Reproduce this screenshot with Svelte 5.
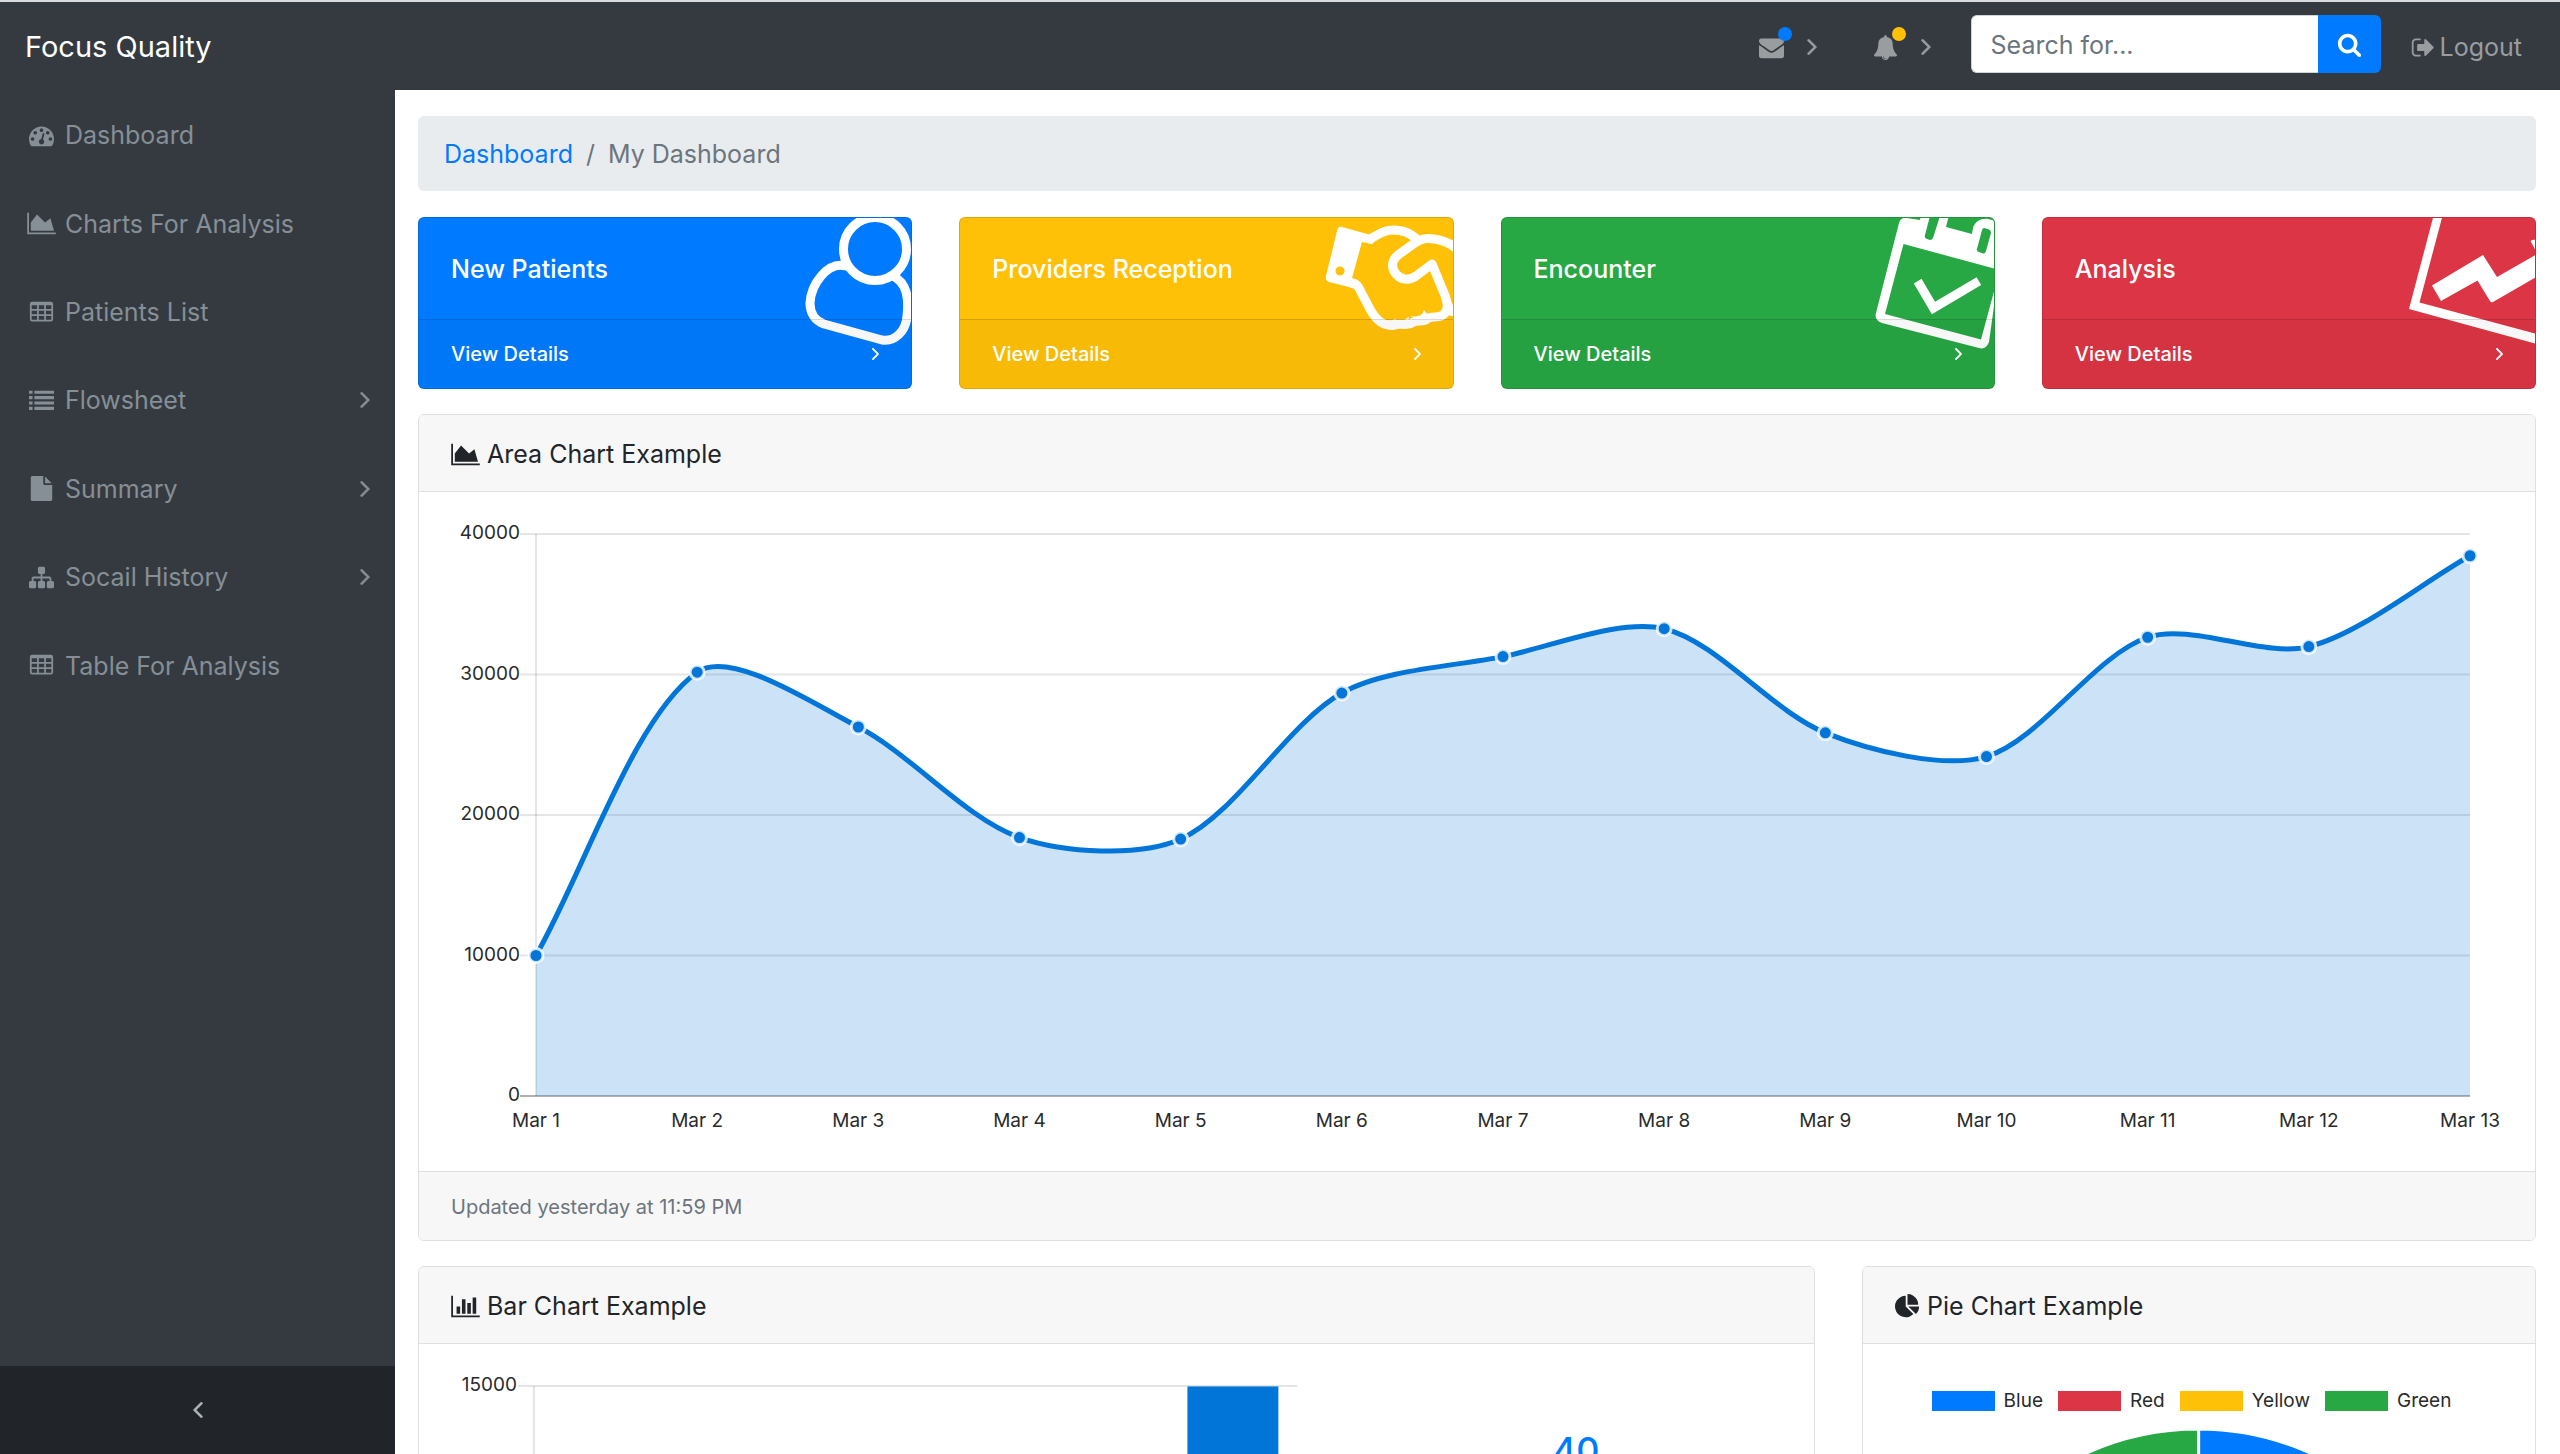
<script>
  const icons = {
    tachometer: { w: 1792, d: 'M384 1152q0-53-37.5-90.5t-90.5-37.5-90.5 37.5-37.5 90.5 37.5 90.5 90.5 37.5 90.5-37.5 37.5-90.5zm192-448q0-53-37.5-90.5t-90.5-37.5-90.5 37.5-37.5 90.5 37.5 90.5 90.5 37.5 90.5-37.5 37.5-90.5zm428 481l101-382q6-26-7.5-48.5t-38.5-29.5-48 6.5-30 39.5l-101 382q-60 5-107 43.5t-63 98.5q-20 77 20 146t117 89 146-20 89-117q16-60-6-117t-72-91zm660-33q0-53-37.5-90.5t-90.5-37.5-90.5 37.5-37.5 90.5 37.5 90.5 90.5 37.5 90.5-37.5 37.5-90.5zm-640-640q0-53-37.5-90.5t-90.5-37.5-90.5 37.5-37.5 90.5 37.5 90.5 90.5 37.5 90.5-37.5 37.5-90.5zm448 192q0-53-37.5-90.5t-90.5-37.5-90.5 37.5-37.5 90.5 37.5 90.5 90.5 37.5 90.5-37.5 37.5-90.5zm320 448q0 261-141 483-19 29-54 29h-1402q-35 0-54-29-141-221-141-483 0-182 71-348t191-286 286-191 348-71 348 71 286 191 191 286 71 348z' },
    area: { w: 2048, d: 'M2048 1536v128h-2048v-1536h128v1408h1920zm-384-1024l256 896h-1664v-576l448-576 576 576z' },
    bar: { w: 2048, d: 'M640 896v512h-256v-512h256zm384-512v1024h-256v-1024h256zm1024 1152v128h-2048v-1536h128v1408h1920zm-640-896v768h-256v-768h256zm384-384v1152h-256v-1152h256z' },
    pie: { w: 1792, d: 'M768 890l546 546q-106 108-247.5 168t-298.5 60q-209 0-385.5-103t-279.5-279.5-103-385.5 103-385.5 279.5-279.5 385.5-103v762zm187 6h773q0 157-60 298.5t-168 247.5zm709-128h-768v-768q209 0 385.5 103t279.5 279.5 103 385.5z' },
    table: { w: 1792, d: 'M224 128h1344q160 0 160 160v1088q0 160-160 160h-1344q-160 0-160-160v-1088q0-160 160-160zM192 384v256h384v-256zM704 384v256h384v-256zM1216 384v256h384v-256zM192 768v256h384v-256zM704 768v256h384v-256zM1216 768v256h384v-256zM192 1152v256h384v-256zM704 1152v256h384v-256zM1216 1152v256h384v-256z' },
    list: { w: 1792, d: 'M0 192h256v224h-256zM384 192h1408v224h-1408zM0 576h256v224h-256zM384 576h1408v224h-1408zM0 960h256v224h-256zM384 960h1408v224h-1408zM0 1344h256v224h-256zM384 1344h1408v224h-1408z' },
    file: { w: 1792, d: 'M1152 512v-472q22 14 36 28l408 408q14 14 28 36h-472zm-128 32q0 40 28 68t68 28h544v1056q0 40-28 68t-68 28h-1344q-40 0-68-28t-28-68v-1600q0-40 28-68t68-28h800v544z' },
    sitemap: { w: 1792, d: 'M1792 1248v320q0 40-28 68t-68 28h-320q-40 0-68-28t-28-68v-320q0-40 28-68t68-28h96v-192h-512v192h96q40 0 68 28t28 68v320q0 40-28 68t-68 28h-320q-40 0-68-28t-28-68v-320q0-40 28-68t68-28h96v-192h-512v192h96q40 0 68 28t28 68v320q0 40-28 68t-68 28h-320q-40 0-68-28t-28-68v-320q0-40 28-68t68-28h96v-192q0-52 38-90t90-38h512v-192h-96q-40 0-68-28t-28-68v-320q0-40 28-68t68-28h320q40 0 68 28t28 68v320q0 40-28 68t-68 28h-96v192h512q52 0 90 38t38 90v192h96q40 0 68 28t28 68z' },
    envelope: { w: 1792, d: 'M1792 710v794q0 66-47 113t-113 47h-1472q-66 0-113-47t-47-113v-794q44 49 101 87 362 246 497 345 57 42 92.5 65.5t94.5 48 110 24.5h2q51 0 110-24.5t94.5-48 92.5-65.5q170-123 498-345 57-39 100-87zm0-294q0 79-49 151t-122 123q-376 261-468 325-10 7-42.5 31t-54 38.5-52 32.5-57.5 27-50 9h-2q-23 0-50-9t-57.5-27-52-32.5-54-38.5-42.5-31q-91-64-262-182.5t-205-142.5q-62-42-117-115.5t-55-136.5q0-78 41.5-130t118.5-52h1472q65 0 112.5 47t47.5 113z' },
    bell: { w: 1792, d: 'M912 1696q0-16-16-16-59 0-101.5-42.5t-42.5-101.5q0-16-16-16t-16 16q0 73 51.5 124.5t124.5 51.5q16 0 16-16zm816-288q0 52-38 90t-90 38h-448q0 106-75 181t-181 75-181-75-75-181h-448q-52 0-90-38t-38-90q50-42 91-88t85-119.5 74.5-158.5 50-206 19.5-260q0-152 117-282.5t307-158.5q-8-19-8-39 0-40 28-68t68-28 68 28 28 68q0 20-8 39 190 28 307 158.5t117 282.5q0 139 19.5 260t50 206 74.5 158.5 85 119.5 91 88z' },
    search: { w: 1792, d: 'M1216 832q0-185-131.5-316.5t-316.5-131.5-316.5 131.5-131.5 316.5 131.5 316.5 316.5 131.5 316.5-131.5 131.5-316.5zm512 832q0 52-38 90t-90 38q-54 0-90-38l-343-342q-179 124-399 124-143 0-273.5-55.5t-225-150-150-225-55.5-273.5 55.5-273.5 150-225 225-150 273.5-55.5 273.5 55.5 225 150 150 225 55.5 273.5q0 220-124 399l343 343q37 37 37 90z' },
    signout: { w: 1664, d: 'M704 1440q0 4 1 20t.5 26.5-3 23.5-10 19.5-20.5 6.5h-320q-119 0-203.5-84.5t-84.5-203.5v-704q0-119 84.5-203.5t203.5-84.5h320q13 0 22.5 9.5t9.5 22.5q0 4 1 20t.5 26.5-3 23.5-10 19.5-20.5 6.5h-320q-66 0-113 47t-47 113v704q0 66 47 113t113 47h312l11.5 1 11.5 3 8 5.5 7 9 2 13.5zm928-544q0 26-19 45l-544 544q-19 19-45 19t-45-19-19-45v-288h-448q-26 0-45-19t-19-45v-384q0-26 19-45t45-19h448v-288q0-26 19-45t45-19 45 19l544 544q19 19 19 45z' }
  };

  const navItems = [
    { label: 'Dashboard', icon: 'tachometer' },
    { label: 'Charts For Analysis', icon: 'area' },
    { label: 'Patients List', icon: 'table' },
    { label: 'Flowsheet', icon: 'list', children: true },
    { label: 'Summary', icon: 'file', children: true },
    { label: 'Socail History', icon: 'sitemap', children: true },
    { label: 'Table For Analysis', icon: 'table' }
  ];

  const cards = [
    { title: 'New Patients', color: 'primary', art: 'user' },
    { title: 'Providers Reception', color: 'warning', art: 'handshake' },
    { title: 'Encounter', color: 'success', art: 'calendar' },
    { title: 'Analysis', color: 'danger', art: 'line' }
  ];

  // Area chart
  const visits = [10000, 30162, 26263, 18394, 18287, 28682, 31274, 33259, 25849, 24159, 32651, 31984, 38451];
  const area = { left: 85, right: 2019, top: 10, bottom: 572, max: 40000 };
  const areaTicks = [0, 10000, 20000, 30000, 40000];
  const areaY = (v) => area.bottom - (v / area.max) * (area.bottom - area.top);
  const points = visits.map((v, i) => ({
    x: area.left + (i * (area.right - area.left)) / (visits.length - 1),
    y: areaY(v),
    label: `Mar ${i + 1}`
  }));

  // Control points on either side of a point, weighted by segment length
  function controls(i, tension = 0.3) {
    const cur = points[i];
    const prev = points[i - 1] || cur;
    const next = points[i + 1] || cur;
    const d01 = Math.hypot(cur.x - prev.x, cur.y - prev.y);
    const d12 = Math.hypot(next.x - cur.x, next.y - cur.y);
    const fa = (tension * d01) / (d01 + d12);
    const fb = (tension * d12) / (d01 + d12);
    const dx = next.x - prev.x;
    const dy = next.y - prev.y;
    return {
      before: `${cur.x - fa * dx} ${cur.y - fa * dy}`,
      after: `${cur.x + fb * dx} ${cur.y + fb * dy}`
    };
  }

  const linePath = points
    .map((p, i) => (i === 0 ? `M${p.x} ${p.y}` : `C${controls(i - 1).after} ${controls(i).before} ${p.x} ${p.y}`))
    .join(' ');
  const fillPath = `${linePath} L${area.right} ${area.bottom} L${area.left} ${area.bottom} Z`;

  // Bar chart
  const revenue = [4215, 5312, 6251, 7841, 9821, 14984];
  const barTicks = [0, 5000, 10000, 15000];
  const barY = (v) => 410 - (v / 15000) * 400;

  // Pie chart
  const slices = [
    { label: 'Blue', value: 12.21, color: '#007bff' },
    { label: 'Red', value: 15.58, color: '#dc3545' },
    { label: 'Yellow', value: 11.25, color: '#ffc107' },
    { label: 'Green', value: 8.32, color: '#28a745' }
  ];
  const total = slices.reduce((sum, s) => sum + s.value, 0);
  let angle = 0;
  const wedges = slices.map((s) => {
    const start = angle;
    angle += (s.value / total) * Math.PI * 2;
    const large = angle - start > Math.PI ? 1 : 0;
    const at = (a) => `${274 + 272 * Math.sin(a)} ${274 - 272 * Math.cos(a)}`;
    return { color: s.color, d: `M274 274 L${at(start)} A272 272 0 ${large} 1 ${at(angle)} Z` };
  });

  let search = $state('');
  let collapsed = $state(false);
</script>

{#snippet icon(name)}
  <svg class="icon" class:wide={icons[name].w > 1792} viewBox="0 0 {icons[name].w} 1792" aria-hidden="true">
    <path fill-rule="evenodd" d={icons[name].d} />
  </svg>
{/snippet}

{#snippet chevron()}
  <svg class="chevron" viewBox="589 461 582 998" aria-hidden="true">
    <path d="M1171 960q0 13-10 23l-466 466q-10 10-23 10t-23-10l-50-50q-10-10-10-23t10-23l393-393-393-393q-10-10-10-23t10-23l50-50q10-10 23-10t23 10l466 466q10 10 10 23z" />
  </svg>
{/snippet}

<div class="app" class:collapsed>
  <header class="topbar">
    <a class="brand" href="#home">Focus Quality</a>
    <div class="tools">
      <button type="button" class="tool" aria-label="Messages">
        <span class="tool-icon">{@render icon('envelope')}<span class="dot blue"></span></span>
        {@render chevron()}
      </button>
      <button type="button" class="tool" aria-label="Alerts">
        <span class="tool-icon">{@render icon('bell')}<span class="dot yellow"></span></span>
        {@render chevron()}
      </button>
      <form class="search" onsubmit={(e) => e.preventDefault()}>
        <input type="text" placeholder="Search for..." aria-label="Search for" bind:value={search} />
        <button type="submit" aria-label="Search">{@render icon('search')}</button>
      </form>
      <a class="logout" href="#logout">{@render icon('signout')}Logout</a>
    </div>
  </header>

  <div class="shell">
    <aside class="sidebar">
      <nav>
        {#each navItems as item}
          <a href="#nav">
            <span class="fw">{@render icon(item.icon)}</span>
            <span class="label">{item.label}</span>
            {#if item.children}{@render chevron()}{/if}
          </a>
        {/each}
      </nav>
      <button type="button" class="toggle" aria-label="Toggle sidebar" onclick={() => (collapsed = !collapsed)}>
        {@render chevron()}
      </button>
    </aside>

    <main>
      <ol class="breadcrumb">
        <li><a href="#dashboard">Dashboard</a></li>
        <li>My Dashboard</li>
      </ol>

      <div class="cards">
        {#each cards as card}
          <section class="stat {card.color}">
            <svg class="art" viewBox="0 0 140 140" aria-hidden="true">
              {#if card.art === 'user'}
                <g class="outline">
                  <circle cx="104" cy="31" r="31.5" />
                  <path d="M75 48C56 43 40 67 39 85C39 95 44 103 53 106L111 122C124 124 135 113 136 98C138 80 136 65 122 58" />
                </g>
              {:else if card.art === 'handshake'}
                <path fill-rule="evenodd" d="M29 9L58 17L60 26L49 24L39 60L45 62L40 70L16 64Q12 63 13 58L24 13Q25 8 29 9ZM31.500 53A4.500 4.500 0 1 0 22.500 53A4.500 4.500 0 1 0 31.500 53Z" />
                <g class="outline">
                  <path d="M57 21C64 18 69 12 80 12C91 12 96 15 104 21" />
                  <path d="M144 31C136 24 125 21 116 20.500C108 20 103 24 99 27L85 37C78 43 78 50 83 56C88 62 96 63 103 58L119 46L131 75C135 85 136 92 130 97C124 101 119 97 114 101C110 105 103 101 99 105C94 108 86 105 82 107C72 109 64 103 58 93L48 74C46 69 43 65 40 66" />
                  <path d="M135 87L137 93L144 94" />
                </g>
                <path d="M111 92Q115 98 120 98L109 103L97 98Q101 99 105 98Q110 97 111 92ZM82 101Q88 105 96 99L95 107L76 107L74 102Q78 103 82 101Z" />
              {:else if card.art === 'calendar'}
                <path fill-rule="evenodd" d="M45 5Q47-1 53 0L66 2L67-3H95L92 9L118 16L119 10C121 3 128 0 134 1L142 3V74L135 124Q132 132 125 130L28 105Q20 102 22 95ZM49.500 26L31 96L127 121.500L142 66V51ZM76-2L71 17Q70 20 73 21L76 22Q78 22 79 20L86-2ZM132 10.500Q129 9 128 12L123 31Q122 33 125 34L129 35.500Q131 36 132 33L137 15Q137 12 135 11.500Z" />
                <path class="check" d="M66 67L79.500 90L121 65.500" />
              {:else}
                <path d="M39-4H48L24.500 84.500L142 116V126L14 91ZM37 67.500L88 37L102 59L142 36V58.500L98 84Q96 85 95 83L82.500 62.500L46 83ZM136 24Q135 22 138 22L142 21V35Z" />
              {/if}
            </svg>
            <div class="stat-body">{card.title}</div>
            <a class="stat-footer" href="#details">
              <span>View Details</span>
              {@render chevron()}
            </a>
          </section>
        {/each}
      </div>

      <section class="panel">
        <h2>{@render icon('area')}Area Chart Example</h2>
        <div class="panel-body">
          <svg class="chart" viewBox="0 0 2052 615" role="img" aria-label="Area chart">
            {#each areaTicks as tick}
              <line class="grid" class:zero={tick === 0} x1={area.left - 16} x2={area.right} y1={areaY(tick)} y2={areaY(tick)} />
              <text x={area.left - 16} y={areaY(tick) + 5} text-anchor="end">{tick}</text>
            {/each}
            <line class="grid" x1={area.left} x2={area.left} y1={area.top} y2={area.bottom} />
            <path class="area-fill" d={fillPath} />
            <path class="area-line" d={linePath} />
            {#each points as p}
              <circle class="point" cx={p.x} cy={p.y} r="7" />
              <text x={p.x} y="603" text-anchor="middle">{p.label}</text>
            {/each}
          </svg>
        </div>
        <div class="panel-footer">Updated yesterday at 11:59 PM</div>
      </section>

      <div class="row">
        <section class="panel">
          <h2>{@render icon('bar')}Bar Chart Example</h2>
          <div class="panel-body bar-body">
            <svg class="chart" viewBox="0 0 872 436" role="img" aria-label="Bar chart">
              {#each barTicks as tick}
                <line class="grid" x1="67" x2="847" y1={barY(tick)} y2={barY(tick)} />
                <text x="66" y={barY(tick) + 5} text-anchor="end">{tick}</text>
              {/each}
              <line class="grid" x1="83" x2="83" y1="10" y2="410" />
              {#each revenue as value, i}
                <rect class="bar" x={102 + i * 127} y={barY(value)} width="91" height={410 - barY(value)} />
              {/each}
            </svg>
            <div class="figure">40</div>
          </div>
        </section>

        <section class="panel">
          <h2>{@render icon('pie')}Pie Chart Example</h2>
          <div class="panel-body">
            <ul class="legend">
              {#each slices as s}
                <li><span class="swatch" style="background: {s.color}"></span>{s.label}</li>
              {/each}
            </ul>
            <svg class="pie" viewBox="0 0 548 548" role="img" aria-label="Pie chart">
              {#each wedges as w}
                <path d={w.d} fill={w.color} />
              {/each}
            </svg>
          </div>
        </section>
      </div>
    </main>
  </div>
</div>

<style>
  :global(body) {
    margin: 0;
  }

  .app {
    height: 100vh;
    display: flex;
    flex-direction: column;
    overflow: hidden;
    box-sizing: border-box;
    border-top: 2px solid #dadce0;
    background: #fff;
    color: #212529;
    font-family: Inter, "Liberation Sans", sans-serif;
    font-size: 25px;
    line-height: 38px;
  }

  a {
    color: inherit;
    text-decoration: none;
  }

  button {
    padding: 0;
    border: 0;
    background: none;
    color: inherit;
    font: inherit;
    cursor: pointer;
  }

  .icon {
    width: 25px;
    height: 25px;
    fill: currentColor;
    flex: none;
  }

  .icon.wide {
    width: 29px;
  }

  .chevron {
    width: 10px;
    height: 16px;
    fill: currentColor;
    stroke: currentColor;
    stroke-width: 30px;
    flex: none;
  }

  /* Top bar */
  .topbar {
    flex: none;
    height: 88px;
    box-sizing: border-box;
    display: flex;
    align-items: center;
    justify-content: space-between;
    padding: 2px 38px 0 25px;
    background: #343a40;
    color: #9a9da0;
  }

  .brand {
    color: #fff;
    font-size: 29px;
  }

  .tools {
    display: flex;
    align-items: center;
  }

  .tool {
    display: flex;
    align-items: center;
    gap: 23px;
    margin-right: 56px;
  }

  .tool + .tool {
    margin-right: 40px;
  }

  .tool-icon {
    position: relative;
    display: flex;
  }

  .dot {
    position: absolute;
    top: -8px;
    right: -8px;
    width: 14px;
    height: 14px;
    border-radius: 50%;
  }

  .dot.blue {
    background: #007bff;
  }

  .dot.yellow {
    background: #ffc107;
  }

  .search {
    display: flex;
    height: 58px;
    margin: 0 29px 6px 0;
  }

  .search input {
    width: 347px;
    box-sizing: border-box;
    padding: 2px 19px 0;
    border: 1px solid #ced4da;
    border-right: 0;
    border-radius: 6px 0 0 6px;
    background: #fff;
    color: #495057;
    font: inherit;
  }

  .search input::placeholder {
    color: #6c757d;
    opacity: 1;
  }

  .search button {
    width: 63px;
    display: flex;
    align-items: center;
    justify-content: center;
    border-radius: 0 6px 6px 0;
    background: #007bff;
    color: #fff;
  }

  .logout {
    display: flex;
    align-items: center;
    gap: 5px;
  }

  /* Sidebar */
  .shell {
    flex: 1;
    min-height: 0;
    display: flex;
  }

  .sidebar {
    flex: none;
    width: 395px;
    display: flex;
    flex-direction: column;
    justify-content: space-between;
    background: #343a40;
    color: #868e96;
  }

  .collapsed .sidebar {
    width: 88px;
  }

  nav {
    display: grid;
    grid-auto-rows: 1fr;
    min-height: 619px;
    padding-top: 1px;
  }

  nav a {
    display: flex;
    align-items: center;
    padding: 0 25px;
    overflow: hidden;
  }

  .fw {
    width: 32px;
    display: flex;
    justify-content: center;
    margin-right: 8px;
  }

  .label {
    flex: 1;
    white-space: nowrap;
  }

  .toggle {
    height: 88px;
    display: flex;
    align-items: center;
    justify-content: center;
    background: #212529;
    color: #adb5bd;
  }

  .toggle .chevron {
    transform: rotate(180deg);
  }

  .collapsed .toggle .chevron {
    transform: none;
  }

  /* Content */
  main {
    flex: 1;
    min-width: 0;
    overflow: hidden;
    padding: 26px 24px 0 23px;
  }

  .breadcrumb {
    display: flex;
    margin: 0 0 26px;
    padding: 19px 26px 18px;
    border-radius: 6px;
    background: #e9ecef;
    color: #6c757d;
    list-style: none;
  }

  .breadcrumb li + li::before {
    content: '/';
    padding: 0 13px;
  }

  .breadcrumb a {
    color: #007bff;
  }

  .cards {
    display: grid;
    grid-template-columns: repeat(4, 1fr);
    gap: 47px;
    margin-bottom: 25px;
  }

  .stat {
    position: relative;
    overflow: hidden;
    border: 1px solid rgba(0, 0, 0, 0.125);
    border-radius: 6px;
    color: #fff;
    font-weight: 500;
  }

  .primary {
    background: #007bff;
  }

  .warning {
    background: #ffc107;
  }

  .success {
    background: #28a745;
  }

  .danger {
    background: #dc3545;
  }

  .art {
    position: absolute;
    top: 0;
    right: 0;
    width: 140px;
    height: 140px;
    fill: #fff;
  }

  .outline,
  .check {
    fill: none;
    stroke: #fff;
    stroke-width: 9px;
    stroke-linecap: round;
    stroke-linejoin: round;
  }

  .check {
    stroke-linecap: square;
    stroke-linejoin: miter;
  }

  .stat-body {
    position: relative;
    padding: 32px 32px 31px;
  }

  .stat-footer {
    position: relative;
    display: flex;
    align-items: center;
    justify-content: space-between;
    padding: 15px 32px;
    border-top: 1px solid rgba(0, 0, 0, 0.125);
    background: rgba(0, 0, 0, 0.03);
    font-size: 20px;
  }

  .stat-footer .chevron {
    width: 7px;
    height: 12px;
  }

  .panel {
    margin-bottom: 25px;
    border: 1px solid #dfdfdf;
    border-radius: 6px;
    overflow: hidden;
    background: #fff;
  }

  .panel h2 {
    display: flex;
    align-items: center;
    gap: 7px;
    margin: 0;
    padding: 20px 32px 18px;
    border-bottom: 1px solid #dfdfdf;
    background: #f7f7f7;
    font-size: 25px;
    font-weight: 400;
  }

  .panel-body {
    padding: 32px;
  }

  .panel-footer {
    padding: 16px 32px 14px;
    border-top: 1px solid #dfdfdf;
    background: #f7f7f7;
    color: #6c757d;
    font-size: 20px;
  }

  .row {
    display: grid;
    grid-template-columns: 1397fr 674fr;
    gap: 47px;
    align-items: start;
  }

  .chart {
    display: block;
    width: 100%;
  }

  .chart text {
    fill: #292b2c;
    font-size: 19px;
  }

  .grid {
    stroke: rgba(0, 0, 0, 0.1);
    stroke-width: 2px;
  }

  .grid.zero {
    stroke: rgba(0, 0, 0, 0.3);
  }

  .area-fill {
    fill: rgba(2, 117, 216, 0.2);
  }

  .area-line {
    fill: none;
    stroke: #0275d8;
    stroke-width: 5px;
  }

  .point {
    fill: #0275d8;
    stroke: rgba(255, 255, 255, 0.8);
    stroke-width: 3px;
  }

  .bar {
    fill: #0275d8;
  }

  .bar-body {
    display: grid;
    grid-template-columns: 872fr 412fr;
    gap: 48px;
  }

  .figure {
    padding-top: 52px;
    color: #007bff;
    font-size: 36px;
    font-weight: 500;
    line-height: 44px;
    text-align: center;
  }

  .legend {
    display: flex;
    justify-content: center;
    margin: 0;
    padding: 6px 0 7px;
    list-style: none;
    font-size: 19px;
  }

  .legend li {
    display: flex;
    align-items: center;
    gap: 9px;
    margin-right: 15px;
    color: #292b2c;
  }

  .swatch {
    width: 63px;
    height: 20px;
  }

  .pie {
    display: block;
    width: 90%;
    margin: 0 auto;
  }

  .pie path {
    stroke: #fff;
    stroke-width: 3px;
  }
</style>
